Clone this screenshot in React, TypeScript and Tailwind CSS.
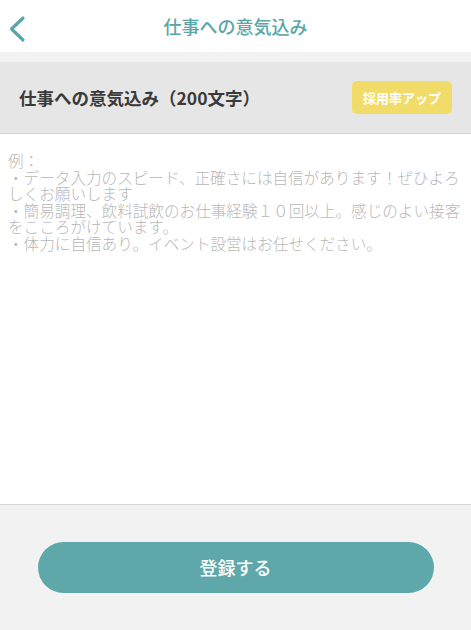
import React from "react";

const font = { fontFamily: '"Noto Sans CJK JP", "Noto Sans", sans-serif' };

export default function App() {
  return (
    <div className="w-[471px] h-[630px] flex flex-col bg-white overflow-hidden" style={font}>
      <header className="h-[52px] shrink-0 relative flex items-center justify-center bg-white">
        <svg className="absolute left-[8px] top-[15px]" width="20" height="28" viewBox="0 0 20 28" fill="none">
          <path d="M15 3 L3.5 14 L15 25" stroke="#5aa6a6" strokeWidth="3.2" strokeLinecap="round" strokeLinejoin="round" />
        </svg>
        <h1 className="text-[18px] leading-none font-medium text-[#5aa6a6]">仕事への意気込み</h1>
      </header>
      <div className="h-[10px] shrink-0 bg-[#f2f2f2]" />
      <div className="h-[72px] shrink-0 flex items-center justify-between pl-[19px] pr-[19px] bg-[#e6e6e6] border-b border-[#d4d4d4]">
        <span className="text-[17.5px] font-bold text-[#3a3a3a] leading-none">仕事への意気込み（200文字）</span>
        <span className="w-[100px] h-[33px] flex items-center justify-center rounded-[5px] bg-[#f1dc6a] text-white text-[13px] font-bold">採用率アップ</span>
      </div>
      <div className="h-[371px] shrink-0 bg-white border-b border-[#d6d6d6] px-[8px] pt-[18px]">
        <p className="text-[15.6px] leading-[16.6px] font-light text-[#b8b8b8] whitespace-pre-wrap">
          {"例：\n・データ入力のスピード、正確さには自信があります！ぜひよろしくお願いします\n・簡易調理、飲料試飲のお仕事経験１０回以上。感じのよい接客をこころがけています。\n・体力に自信あり。イベント設営はお任せください。"}
        </p>
      </div>
      <div className="flex-1 bg-[#f2f2f2] flex justify-center pt-[37px]">
        <button className="w-[396px] h-[51px] rounded-full bg-[#5ea8aa] text-white text-[18px] font-medium">登録する</button>
      </div>
    </div>
  );
}
